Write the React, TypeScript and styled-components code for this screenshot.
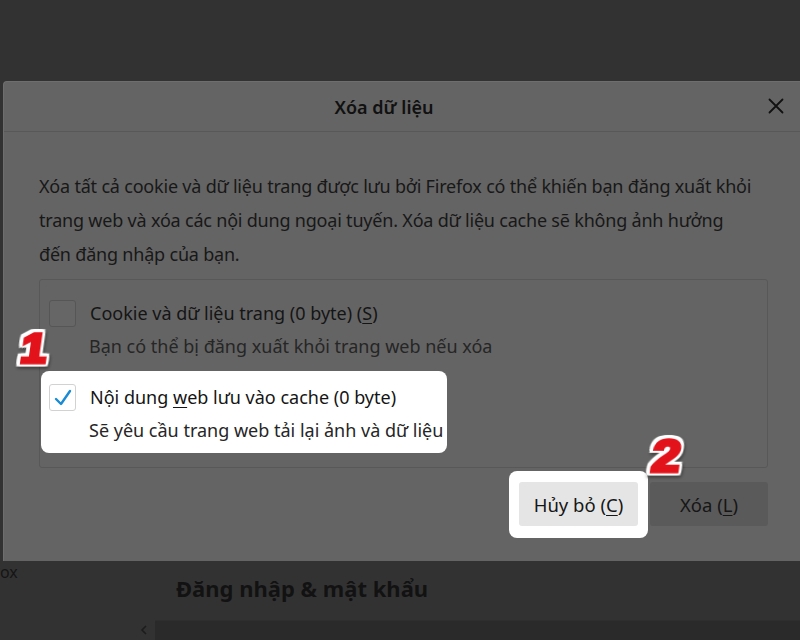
import * as React from "react";
import styled, { createGlobalStyle } from "styled-components";

const GlobalStyle = createGlobalStyle`
	html, body {
		margin: 0;
		padding: 0;
		background: #323232;
	}
	body {
		font-family: "Noto Sans", "Open Sans", sans-serif;
	}
`;

const Page = styled.div`
	position: relative;
	width: 800px;
	height: 640px;
	overflow: hidden;
	background: #323232;
	display: flex;
	flex-direction: column;
	justify-content: flex-end;
`;

/* the settings page that lies under the modal */
const Behind = styled.div`
	display: flex;
	flex-direction: column;
`;

const BehindRow = styled.div`
	display: grid;
	grid-template-columns: 176px 1fr;
	align-items: start;
`;

const CutText = styled.div`
	font-size: 16px;
	line-height: 20px;
	color: #151515;
`;

const SectionTitle = styled.h2`
	margin: 9px 0 0;
	font-size: 22px;
	font-weight: 700;
	line-height: 34px;
	color: #121212;
`;

const BottomBar = styled.div`
	display: flex;
	align-items: center;
	height: 20px;
	margin-top: 15px;
	margin-left: 133px;
	.arrow {
		width: 22px;
		display: flex;
		justify-content: center;
	}
	.track {
		flex: 1;
		height: 100%;
		background: #2a2a2a;
		border-top: 1px solid #2e2e2e;
	}
`;

const Dialog = styled.div`
	position: absolute;
	left: 3px;
	top: 81px;
	width: 830px;
	background: #646464;
	border-top: 1px solid #6e6e6e;
	border-left: 1px solid #6e6e6e;
	border-radius: 4px 0 0 0;
	color: #161616;
`;

const Header = styled.div`
	position: relative;
	height: 49px;
	display: flex;
	align-items: center;
	justify-content: center;
	padding-right: 70px;
	border-bottom: 1px solid #585858;
	h1 {
		margin: 0;
		font-size: 18px;
		font-weight: 600;
		color: #111;
	}
`;

const CloseButton = styled.button`
	position: absolute;
	left: 756px;
	top: 8px;
	width: 32px;
	height: 32px;
	border: 0;
	padding: 0;
	background: transparent;
	display: flex;
	align-items: center;
	justify-content: center;
`;

const Body = styled.div`
	padding: 37px 0 35px 35px;
	width: 729px;
`;

const Intro = styled.p`
	margin: 0 0 8px;
	font-size: 18px;
	line-height: 34px;
	letter-spacing: -0.2px;
	white-space: nowrap;
	color: #181818;
`;

const Panel = styled.div`
	border: 1px solid #585858;
	border-radius: 3px;
	padding: 7px 0 14px 1px;
	display: flex;
	flex-direction: column;
	gap: 2px;
`;

const Item = styled.div<{ $highlight?: boolean }>`
	width: fit-content;
	padding: 13px 4px 9px 8px;
	border-radius: 8px;
	background: ${(p) => (p.$highlight ? "#fff" : "transparent")};
`;

const CheckRow = styled.div`
	display: flex;
	align-items: center;
	gap: 14px;
	font-size: 18px;
	line-height: 27px;
	color: #151515;
	u {
		text-underline-offset: 3px;
	}
`;

const Box = styled.span<{ $checked?: boolean }>`
	width: 25px;
	height: 25px;
	border-radius: 3px;
	border: 1px solid ${(p) => (p.$checked ? "#d2d2d2" : "#565656")};
	background: ${(p) => (p.$checked ? "#fff" : "#666")};
	display: flex;
	align-items: center;
	justify-content: center;
`;

const Hint = styled.div`
	margin: 5px 0 0 40px;
	font-size: 18px;
	line-height: 28px;
	color: #262626;
`;

const Actions = styled.div`
	display: flex;
	justify-content: flex-end;
	gap: 12px;
	margin-top: 14px;
`;

const Spot = styled.div`
	background: #fff;
	border-radius: 8px;
	padding: 11px 10px 12px;
	margin: -11px -10px -12px;
	display: flex;
`;

const Button = styled.button<{ $primary?: boolean }>`
	width: ${(p) => (p.$primary ? "119px" : "118px")};
	height: 44px;
	border: 0;
	border-radius: 3px;
	font-family: inherit;
	font-size: 18.5px;
	color: #161616;
	background: ${(p) => (p.$primary ? "#e5e5e5" : "#5a5a5a")};
	u {
		text-underline-offset: 3px;
	}
`;

/* red step numbers painted over the screenshot */
const Badge = styled.span<{ $x: number; $y: number; $size: number }>`
	position: absolute;
	left: ${(p) => p.$x}px;
	top: ${(p) => p.$y}px;
	font-family: "Liberation Sans", Arial, sans-serif;
	font-weight: 700;
	font-size: ${(p) => p.$size}px;
	line-height: 1;
	color: #e3131b;
	-webkit-text-stroke: 3.5px #e3131b;
	transform: skewX(-8deg) scaleX(1.12);
	transform-origin: left bottom;
	filter: drop-shadow(2.5px 0 0 #fff) drop-shadow(-2.5px 0 0 #fff) drop-shadow(0 2.5px 0 #fff)
		drop-shadow(0 -2.5px 0 #fff) drop-shadow(1px 2px 1.5px rgba(0, 0, 0, 0.4));
`;

const Close = () => (
	<svg width="16" height="16" viewBox="0 0 16 16">
		<path d="M1.5 1.5 L14.5 14.5 M14.5 1.5 L1.5 14.5" stroke="#111" strokeWidth="1.8" strokeLinecap="round" />
	</svg>
);

const Tick = () => (
	<svg width="20" height="20" viewBox="0 0 20 20">
		<path d="M3 11 L8 16 L17 3" fill="none" stroke="#1a8ad4" strokeWidth="2.4" strokeLinecap="round" strokeLinejoin="round" />
	</svg>
);

const Chevron = () => (
	<svg width="8" height="10" viewBox="0 0 8 10">
		<path d="M6 1 L2 5 L6 9" fill="none" stroke="#1c1c1c" strokeWidth="1.6" />
	</svg>
);

const App: React.FC = () => {
	return (
		<>
			<GlobalStyle />
			<Page>
				<Behind>
					<BehindRow>
						<CutText>ox</CutText>
						<SectionTitle>Đăng nhập &amp; mật khẩu</SectionTitle>
					</BehindRow>
					<BottomBar>
						<span className="arrow"><Chevron /></span>
						<div className="track" />
					</BottomBar>
				</Behind>

				<Dialog>
					<Header>
						<h1>Xóa dữ liệu</h1>
						<CloseButton aria-label="close"><Close /></CloseButton>
					</Header>
					<Body>
						<Intro>
							Xóa tất cả cookie và dữ liệu trang được lưu bởi Firefox có thể khiến bạn đăng xuất khỏi
							<br />
							trang web và xóa các nội dung ngoại tuyến. Xóa dữ liệu cache sẽ không ảnh hưởng
							<br />
							đến đăng nhập của bạn.
						</Intro>
						<Panel>
							<Item>
								<CheckRow>
									<Box />
									<span>Cookie và dữ liệu trang (0 byte) (<u>S</u>)</span>
								</CheckRow>
								<Hint>Bạn có thể bị đăng xuất khỏi trang web nếu xóa</Hint>
							</Item>
							<Item $highlight>
								<CheckRow>
									<Box $checked><Tick /></Box>
									<span>Nội dung <u>w</u>eb lưu vào cache (0 byte)</span>
								</CheckRow>
								<Hint>Sẽ yêu cầu trang web tải lại ảnh và dữ liệu</Hint>
							</Item>
						</Panel>
						<Actions>
							<Spot>
								<Button $primary>Hủy bỏ (<u>C</u>)</Button>
							</Spot>
							<Button>Xóa (<u>L</u>)</Button>
						</Actions>
					</Body>
				</Dialog>

				<Badge $x={18} $y={328} $size={42}>1</Badge>
				<Badge $x={649} $y={433} $size={46}>2</Badge>
			</Page>
		</>
	);
};

export default App;
